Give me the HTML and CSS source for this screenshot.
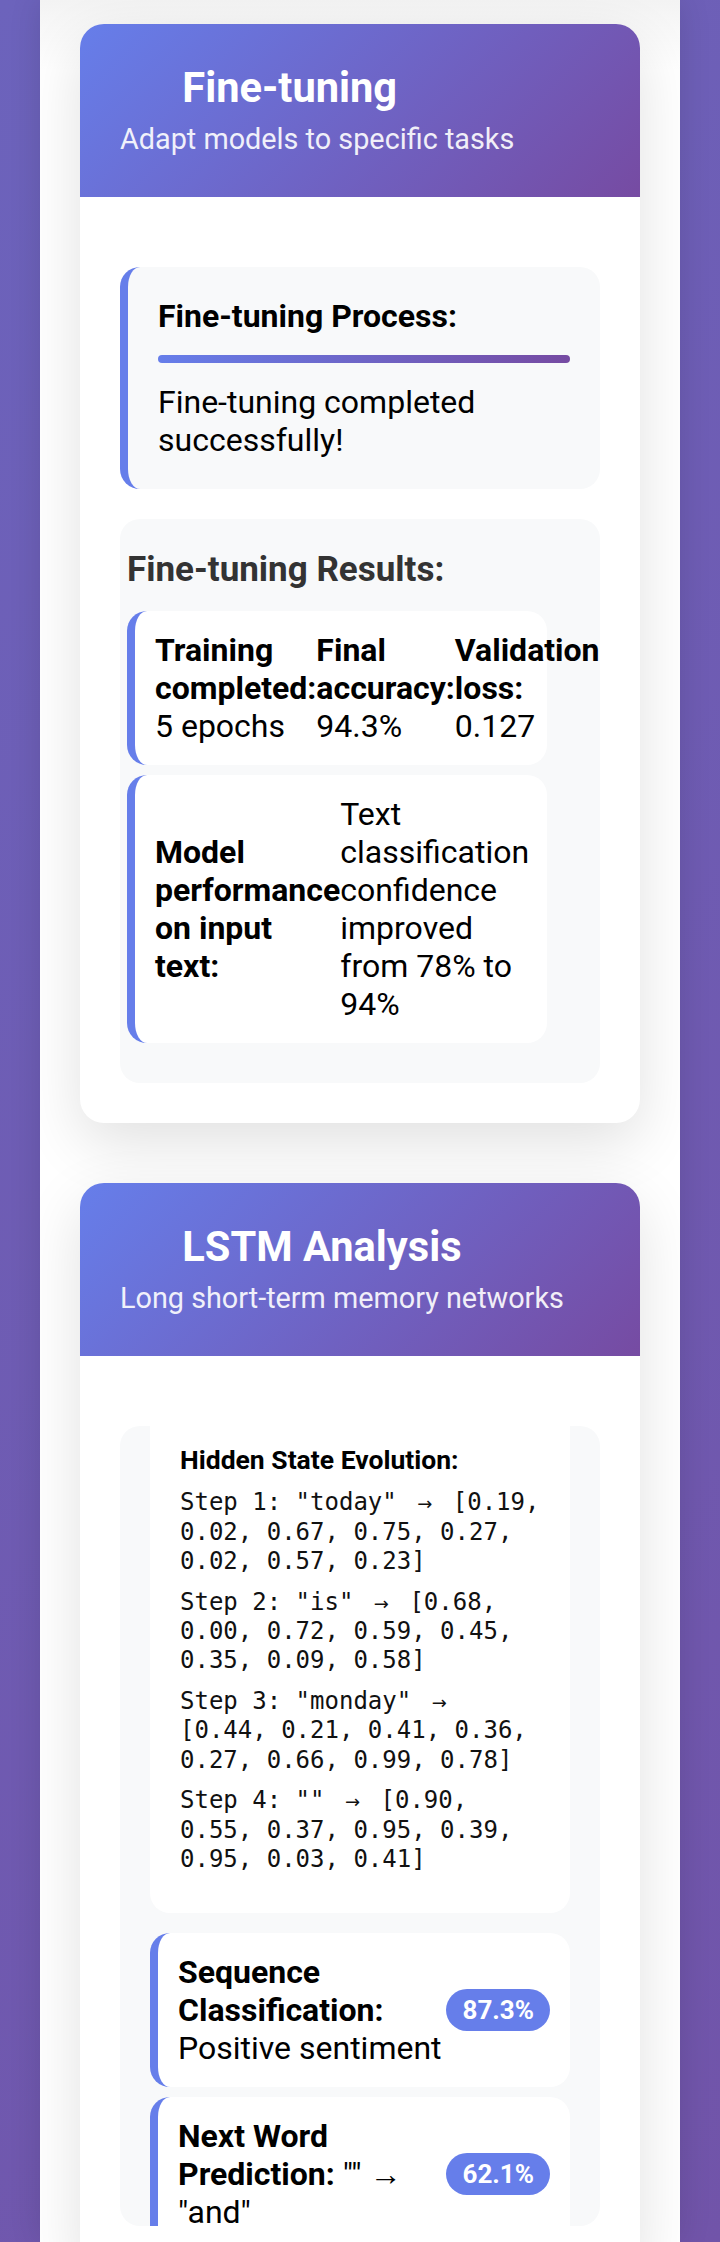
FILE: index.html
```html
<!DOCTYPE html>
<html lang="en">
<head>
<meta charset="utf-8">
<title>Fine-tuning and LSTM Analysis</title>
<link rel="stylesheet" href="styles.css">
</head>
<body>
<div class="container">
  <section class="card">
    <div class="card-header">
      <h2 class="card-title"><span class="title-icon"></span> Fine-tuning</h2>
      <p class="card-subtitle">Adapt models to specific tasks</p>
    </div>
    <div class="card-body">
      <div class="process-box">
        <h4 class="process-title">Fine-tuning Process:</h4>
        <div class="progress-bar"></div>
        <p class="process-text">Fine-tuning completed successfully!</p>
      </div>
      <div class="results-box">
        <h3 class="results-title">Fine-tuning Results:</h3>
        <div class="result-item">
          <div class="metric"><strong>Training completed:</strong> 5 epochs</div>
          <div class="metric"><strong>Final accuracy:</strong> 94.3%</div>
          <div class="metric"><strong>Validation loss:</strong> 0.127</div>
        </div>
        <div class="result-item">
          <div class="metric"><strong>Model performance on input text:</strong></div>
          <div class="metric">Text classification confidence improved from 78% to 94%</div>
        </div>
      </div>
    </div>
  </section>

  <section class="card">
    <div class="card-header">
      <h2 class="card-title"><span class="title-icon"></span> LSTM Analysis</h2>
      <p class="card-subtitle">Long short-term memory networks</p>
    </div>
    <div class="card-body">
      <div class="lstm-box">
        <div class="state-box">
          <h4 class="state-title">Hidden State Evolution:</h4>
          <div class="step">Step 1: "today" <span class="arrow">→</span> [0.19, 0.02, 0.67, 0.75, 0.27, 0.02, 0.57, 0.23]</div>
          <div class="step">Step 2: "is" <span class="arrow">→</span> [0.68, 0.00, 0.72, 0.59, 0.45, 0.35, 0.09, 0.58]</div>
          <div class="step">Step 3: "monday" <span class="arrow">→</span> [0.44, 0.21, 0.41, 0.36, 0.27, 0.66, 0.99, 0.78]</div>
          <div class="step">Step 4: "" <span class="arrow">→</span> [0.90, 0.55, 0.37, 0.95, 0.39, 0.95, 0.03, 0.41]</div>
        </div>
        <div class="prediction">
          <div class="pred-text"><strong>Sequence Classification:</strong> Positive sentiment</div>
          <span class="badge">87.3%</span>
        </div>
        <div class="prediction">
          <div class="pred-text"><strong>Next Word Prediction:</strong> "" → "and"</div>
          <span class="badge">62.1%</span>
        </div>
      </div>
    </div>
  </section>
</div>
</body>
</html>
```

FILE: styles.css
```css
* {
  box-sizing: border-box;
}

html,
body {
  margin: 0;
  padding: 0;
}

body {
  font-family: Roboto, "Liberation Sans", sans-serif;
  color: #000;
  background: linear-gradient(135deg, #6c63bc 0%, #7154a9 100%);
}

.container {
  margin: 0 40px;
  height: 2242px;
  overflow: hidden;
  padding: 24px 40px 40px;
  background: linear-gradient(to bottom, #f3f3f3 0, #ffffff 70px);
  box-shadow: 0 0 30px rgba(0, 0, 0, 0.12);
}

.card {
  background: #fff;
  border-radius: 24px;
  overflow: hidden;
  margin-bottom: 60px;
  box-shadow: 0 20px 60px rgba(0, 0, 0, 0.12);
}

.card-header {
  padding: 40px 40px 40.4px;
  color: #fff;
  background: linear-gradient(135deg, #667eea 0%, #764ba2 100%);
}

.card-title {
  margin: 0;
  font-size: 41.6px;
  line-height: 48.2px;
  font-weight: 700;
}

.title-icon {
  display: inline-block;
  width: 52px;
}

.card-subtitle {
  margin: 10px 0 0;
  font-size: 28.8px;
  line-height: 34.6px;
  opacity: 0.9;
}

.card-body {
  padding: 70px 40px 40px;
}

.process-box {
  background: #f8f9fa;
  border-left: 8px solid #667eea;
  border-radius: 20px;
  padding: 30px;
  margin-bottom: 30px;
}

.process-title {
  margin: 0 0 20px;
  font-size: 32px;
  line-height: 38px;
  font-weight: 700;
}

.progress-bar {
  height: 8px;
  border-radius: 4px;
  background: linear-gradient(90deg, #667eea 0%, #764ba2 100%);
  margin-bottom: 20px;
}

.process-text {
  margin: 0;
  font-size: 32px;
  line-height: 38px;
}

.results-box {
  background: #f8f9fa;
  border-radius: 20px;
  padding: 30px 7px;
}

.results-title {
  margin: 0 0 21px;
  font-size: 35px;
  line-height: 41px;
  font-weight: 700;
  color: #333;
}

.result-item {
  width: 420px;
  display: flex;
  align-items: center;
  background: #fff;
  border-left: 8px solid #667eea;
  border-radius: 20px;
  padding: 20px;
  margin-bottom: 10px;
  font-size: 32px;
  line-height: 38px;
}

.metric {
  flex: 1;
}

.lstm-box {
  height: 800px;
  overflow: hidden;
  background: #f8f9fa;
  border-radius: 20px;
  padding: 0 30px;
}

.state-box {
  background: #fff;
  border-radius: 0 0 20px 20px;
  padding: 18px 30px 27px;
  margin-bottom: 20px;
}

.state-title {
  margin: 0 0 12px;
  font-size: 26.5px;
  line-height: 32px;
  font-weight: 700;
}

.step {
  font-family: "DejaVu Sans Mono", monospace;
  font-size: 24px;
  line-height: 29.3px;
  margin-bottom: 11.4px;
  color: #111;
}

.arrow {
  font-family: "DejaVu Sans", sans-serif;
  font-size: 18px;
  line-height: 1;
  padding: 0 6px;
}

.prediction {
  display: flex;
  align-items: center;
  background: #fff;
  border-left: 8px solid #667eea;
  border-radius: 20px;
  padding: 20px;
  margin-bottom: 10px;
  font-size: 32px;
  line-height: 38px;
}

.pred-text {
  flex: 1;
}

.badge {
  background: #667eea;
  color: #fff;
  font-weight: 700;
  font-size: 26px;
  line-height: 30px;
  padding: 6px 16px;
  border-radius: 21px;
  white-space: nowrap;
}
```
